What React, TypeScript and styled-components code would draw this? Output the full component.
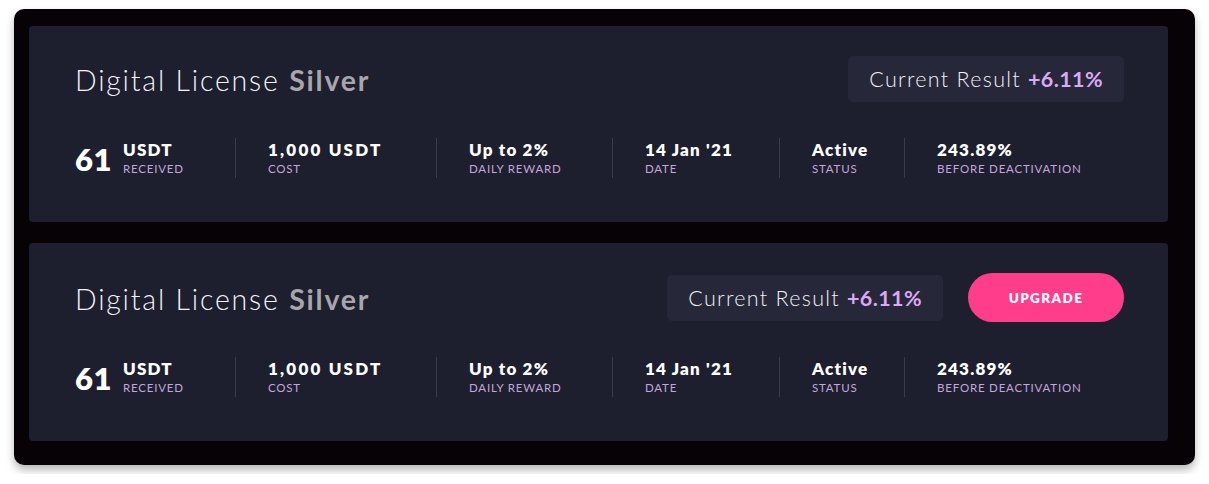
import React from "react";
import styled, { createGlobalStyle } from "styled-components";

const Global = createGlobalStyle`
  html, body { margin: 0; padding: 0; background: #ffffff; }
  body { font-family: "Lato", "Open Sans", sans-serif; }
  #root { padding: 9px 14px; }
`;

const Frame = styled.div`
  width: 1181px;
  height: 456px;
  box-sizing: border-box;
  background: #060206;
  border-radius: 10px;
  padding: 17px 27px 24px 15px;
  display: flex;
  flex-direction: column;
  gap: 21px;
  box-shadow: 0 5px 8px rgba(0, 0, 0, 0.28);
`;

const Card = styled.section<{ $tall?: boolean }>`
  background: #1d1e2e;
  border-radius: 4px;
  padding: 30px 44px 0 46px;
  height: ${(p) => (p.$tall ? "198px" : "196px")};
  box-sizing: border-box;
  display: flex;
  flex-direction: column;
`;

const Header = styled.div<{ $h: number }>`
  display: flex;
  align-items: center;
  height: ${(p) => p.$h}px;
  gap: 25px;
`;

const Title = styled.h2`
  margin: 0 auto 0 0;
  font-family: "Lato", sans-serif;
  font-weight: 300;
  font-size: 28.5px;
  letter-spacing: 1.8px;
  color: #f2f2f6;
  padding-top: 2px;
`;

const Strong = styled.span`
  font-weight: 700;
  color: #a7a6ab;
`;

const Pill = styled.div`
  height: 46px;
  box-sizing: border-box;
  padding: 0 21px;
  display: flex;
  align-items: center;
  background: #262739;
  border-radius: 5px;
  font-size: 21.5px;
  font-weight: 300;
  letter-spacing: 1.3px;
  color: #f0f0f4;
  white-space: nowrap;
`;

const Gain = styled.span`
  font-weight: 700;
  color: #dca8f3;
  margin-left: 7px;
  letter-spacing: 0.4px;
`;

const Button = styled.button`
  width: 156px;
  height: 49px;
  border: none;
  border-radius: 25px;
  background: #ff3d8b;
  color: #ffffff;
  font-family: "Lato", sans-serif;
  font-weight: 800;
  font-size: 13.5px;
  letter-spacing: 1.4px;
  cursor: pointer;
`;

const Stats = styled.div<{ $top: number }>`
  display: grid;
  grid-template-columns: 160px 201px 176px 167px 125px auto;
  margin-top: ${(p) => p.$top}px;
  height: 40px;
`;

const Stat = styled.div<{ $first?: boolean }>`
  display: flex;
  align-items: center;
  gap: 11px;
  padding-left: ${(p) => (p.$first ? 0 : 32)}px;
  border-left: ${(p) => (p.$first ? "none" : "1px solid #393a4f")};
`;

const Big = styled.div`
  font-size: 31px;
  font-weight: 800;
  color: #ffffff;
  letter-spacing: 0.5px;
  line-height: 1;
  padding-top: 2px;
`;

const Texts = styled.div`
  display: flex;
  flex-direction: column;
  gap: 2px;
  margin-top: -1px;
`;

const Value = styled.div<{ $wide?: boolean }>`
  font-size: 17px;
  font-weight: 800;
  color: #ffffff;
  letter-spacing: ${(p) => (p.$wide ? 2.2 : 1.2)}px;
  line-height: 20px;
  white-space: nowrap;
`;

const Label = styled.div`
  font-size: 11.5px;
  font-weight: 400;
  color: #c4a6dc;
  letter-spacing: 0.8px;
  line-height: 14px;
  text-transform: uppercase;
  white-space: nowrap;
`;

const items = [
  { v: "1,000 USDT", l: "Cost", wide: true },
  { v: "Up to 2%", l: "Daily Reward" },
  { v: "14 Jan '21", l: "Date" },
  { v: "Active", l: "Status" },
  { v: "243.89%", l: "Before Deactivation" },
];

const StatRow = ({ top }: { top: number }) => (
  <Stats $top={top}>
    <Stat $first>
      <Big>61</Big>
      <Texts>
        <Value>USDT</Value>
        <Label>Received</Label>
      </Texts>
    </Stat>
    {items.map((it) => (
      <Stat key={it.l}>
        <Texts>
          <Value $wide={it.wide}>{it.v}</Value>
          <Label>{it.l}</Label>
        </Texts>
      </Stat>
    ))}
  </Stats>
);

const LicenseTitle = () => (
  <Title>
    Digital License <Strong>Silver</Strong>
  </Title>
);

const Result = () => (
  <Pill>
    Current Result<Gain>+6.11%</Gain>
  </Pill>
);

export default function App() {
  return (
    <>
      <Global />
      <Frame>
        <Card>
          <Header $h={46}>
            <LicenseTitle />
            <Result />
          </Header>
          <StatRow top={36} />
        </Card>
        <Card $tall>
          <Header $h={49}>
            <LicenseTitle />
            <Result />
            <Button>UPGRADE</Button>
          </Header>
          <StatRow top={35} />
        </Card>
      </Frame>
    </>
  );
}
